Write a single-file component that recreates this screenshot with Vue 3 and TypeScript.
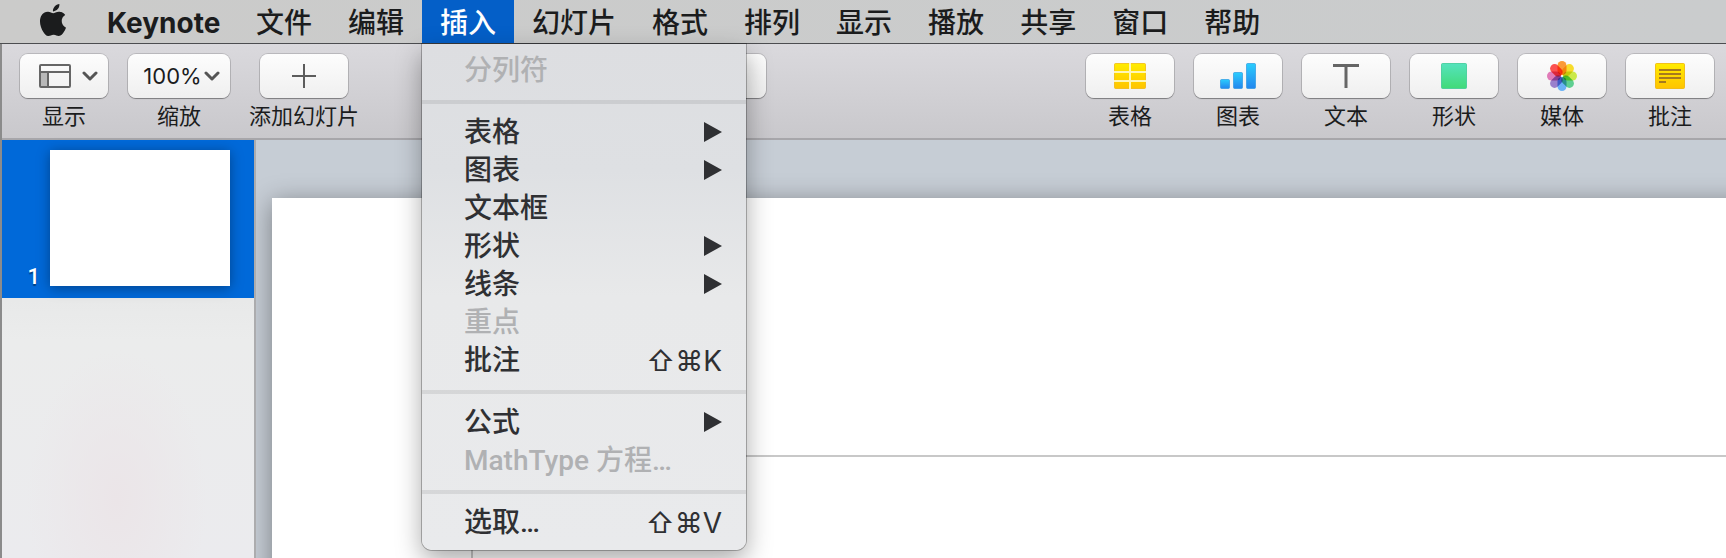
<script setup lang="ts">
import { ref } from 'vue'

interface MenuEntry {
  label: string
  disabled?: boolean
  submenu?: boolean
  keys?: string
}

interface Tool {
  icon: string
  label: string
}

const menus: string[] = ['文件', '编辑', '插入', '幻灯片', '格式', '排列', '显示', '播放', '共享', '窗口', '帮助']
const openMenu = ref<string>('插入')

const groups: MenuEntry[][] = [
  [{ label: '分列符', disabled: true }],
  [
    { label: '表格', submenu: true },
    { label: '图表', submenu: true },
    { label: '文本框' },
    { label: '形状', submenu: true },
    { label: '线条', submenu: true },
    { label: '重点', disabled: true },
    { label: '批注', keys: '⇧⌘K' },
  ],
  [
    { label: '公式', submenu: true },
    { label: 'MathType 方程…', disabled: true },
  ],
  [{ label: '选取…', keys: '⇧⌘V' }],
]

const tools: Tool[] = [
  { icon: 'table', label: '表格' },
  { icon: 'chart', label: '图表' },
  { icon: 'text', label: '文本' },
  { icon: 'shape', label: '形状' },
  { icon: 'media', label: '媒体' },
  { icon: 'note', label: '批注' },
]

const petals: string[] = ['#fb9a36', '#f7dc2c', '#cbe94a', '#5fcf91', '#6ab2f6', '#9a80cc', '#e07bb8', '#fb5150']
</script>

<template>
  <div class="screen">
    <nav class="menubar">
      <button class="apple" type="button" aria-label="Apple">
        <svg width="32" height="32" viewBox="0 0 24 24" fill="#1b1c1d">
          <path d="M12.152 6.896c-.948 0-2.415-1.078-3.96-1.04-2.04.027-3.91 1.183-4.961 3.014-2.117 3.675-.546 9.103 1.519 12.09 1.013 1.454 2.208 3.09 3.792 3.039 1.52-.065 2.09-.987 3.935-.987 1.831 0 2.35.987 3.96.948 1.637-.026 2.676-1.48 3.676-2.948 1.156-1.688 1.636-3.325 1.662-3.415-.039-.013-3.182-1.221-3.22-4.857-.026-3.04 2.48-4.494 2.597-4.559-1.429-2.09-3.623-2.324-4.39-2.376-2-.156-3.675 1.09-4.61 1.09zM15.53 3.83c.843-1.012 1.4-2.427 1.245-3.83-1.207.052-2.662.805-3.532 1.818-.78.896-1.454 2.338-1.273 3.714 1.338.104 2.715-.688 3.559-1.701" />
        </svg>
      </button>
      <button class="title app" type="button">Keynote</button>
      <div v-for="m in menus" :key="m" class="slot">
        <button class="title" :class="{ open: openMenu === m }" type="button" @click="openMenu = m">{{ m }}</button>
        <div v-if="m === '插入' && openMenu === m" class="menu">
          <div v-for="(g, i) in groups" :key="i" class="group">
            <button v-for="e in g" :key="e.label" class="entry" type="button" :disabled="e.disabled">
              <span>{{ e.label }}</span>
              <svg v-if="e.submenu" width="18" height="20" viewBox="0 0 18 20" fill="currentColor"><path d="M0 0 18 10 0 20z" /></svg>
              <span v-if="e.keys" class="keys">{{ e.keys }}</span>
            </button>
          </div>
        </div>
      </div>
    </nav>

    <div class="window">
      <header class="toolbar">
        <div class="tool">
          <button id="view" class="key pull" type="button">
            <svg width="32" height="24" viewBox="0 0 32 24" fill="none" stroke="#666" stroke-width="2">
              <path d="M2 8h8v14H2z" fill="#b9b9b9" stroke="none" />
              <rect x="1" y="1" width="30" height="22" rx="1" />
              <path d="M1 8h30M9 8v15" />
            </svg>
            <svg class="chevron" width="16" height="10" viewBox="0 0 16 10"><path d="m2 2 6 6 6-6" /></svg>
          </button>
          <label for="view">显示</label>
        </div>
        <div class="tool wide">
          <button id="zoom" class="key zoom" type="button">
            100%
            <svg class="chevron" width="16" height="10" viewBox="0 0 16 10"><path d="m2 2 6 6 6-6" /></svg>
          </button>
          <label for="zoom">缩放</label>
        </div>
        <div class="tool add">
          <button id="add" class="key" type="button">
            <svg width="24" height="24" viewBox="0 0 24 24" stroke="#5c5c5c" stroke-width="2"><path d="M12 0v24M0 12h24" /></svg>
          </button>
          <label for="add">添加幻灯片</label>
        </div>
        <div class="tool play">
          <button class="key" type="button"></button>
        </div>
        <div class="tools">
          <div v-for="t in tools" :key="t.icon" class="tool">
            <button :id="t.icon" class="key" type="button">
              <svg v-if="t.icon === 'table'" width="32" height="26" viewBox="0 0 32 26">
                <defs><linearGradient id="gold" x2="0" y2="1"><stop stop-color="#ffec00" /><stop offset="1" stop-color="#ffc400" /></linearGradient></defs>
                <rect x=".5" y=".5" width="31" height="25" rx="1" fill="url(#gold)" stroke="#f0b400" stroke-opacity=".7" />
                <path d="M16 0v26M0 9h32M0 18h32" stroke="#fff6b8" stroke-width="2" />
              </svg>
              <svg v-else-if="t.icon === 'chart'" width="36" height="26" viewBox="0 0 36 26">
                <defs><linearGradient id="blue" x2="0" y2="1"><stop stop-color="#2acdfd" /><stop offset="1" stop-color="#2286ee" /></linearGradient></defs>
                <g fill="url(#blue)" stroke="#1a8fe0" stroke-opacity=".6">
                  <rect x=".5" y="16.500" width="9" height="9" rx="1" />
                  <rect x="13.500" y="9.500" width="9" height="16" rx="1" />
                  <rect x="26.500" y=".5" width="9" height="25" rx="1" />
                </g>
              </svg>
              <svg v-else-if="t.icon === 'text'" width="26" height="26" viewBox="0 0 26 26" stroke="#666" stroke-width="3"><path d="M0 2.500h26M13 2v23" /></svg>
              <svg v-else-if="t.icon === 'shape'" width="26" height="26" viewBox="0 0 26 26">
                <defs><linearGradient id="green" x2="0" y2="1"><stop stop-color="#55e3bd" /><stop offset="1" stop-color="#41da78" /></linearGradient></defs>
                <rect x=".5" y=".5" width="25" height="25" rx="1" fill="url(#green)" stroke="#3ccb96" stroke-opacity=".8" />
              </svg>
              <svg v-else-if="t.icon === 'media'" class="flower" width="30" height="30" viewBox="-15 -15 30 30">
                <rect v-for="(c, i) in petals" :key="c" x="-4.500" y="-15" width="9" height="14" rx="4.500" :fill="c" :transform="`rotate(${i * 45})`" />
              </svg>
              <svg v-else width="30" height="26" viewBox="0 0 30 26">
                <rect x=".5" y=".5" width="29" height="25" rx="1" fill="url(#gold)" stroke="#f0b400" stroke-opacity=".8" />
                <path d="M4 7h22M4 11h22M4 15h22M4 19h7" stroke="#a67a1e" stroke-width="2" />
              </svg>
            </button>
            <label :for="t.icon">{{ t.label }}</label>
          </div>
        </div>
      </header>

      <div class="body">
        <aside class="sidebar">
          <button class="slide-row" type="button">
            <span class="num">1</span>
            <span class="thumb"></span>
          </button>
        </aside>
        <main class="canvas">
          <div class="slide">
            <div class="placeholder"></div>
          </div>
        </main>
      </div>
    </div>
  </div>
</template>

<style scoped>
.screen {
  display: flex;
  flex-direction: column;
  height: 100vh;
  overflow: hidden;
  font-family: Inter, "Noto Sans CJK SC", sans-serif;
  color: #1b1c1d;
}
button {
  margin: 0;
  padding: 0;
  border: 0;
  background: none;
  font: inherit;
  color: inherit;
}
svg {
  display: block;
  flex: none;
}
.menubar {
  position: relative;
  z-index: 2;
  display: flex;
  flex: none;
  height: 43px;
  border-bottom: 1px solid #4c4d50;
  background: linear-gradient(90deg, #cbcbca, #cacccd);
  font-size: 28px;
  line-height: 43px;
}
.apple {
  width: 89px;
  padding: 0 20px 4px 37px;
}
.title {
  display: block;
  height: 43px;
  padding: 3px 18px 0;
  line-height: 40px;
  white-space: nowrap;
  font-weight: 500;
}
.app {
  width: 149px;
  font-weight: 700;
}
.open {
  background: #045fc8;
  color: #fff;
}
.slot {
  position: relative;
}
.menu {
  position: absolute;
  top: 44px;
  left: 0;
  box-sizing: border-box;
  width: 324px;
  padding: 7px 0 9px;
  border-radius: 0 0 10px 10px;
  background: linear-gradient(#dddee1, #dee0e3 25%, #e8e9ea 50%, #e9eaec);
  box-shadow: 0 0 0 1px rgba(0, 0, 0, .26), 0 10px 26px rgba(0, 0, 0, .34);
  color: #2f3033;
  font-family: Roboto, Inter, "Noto Sans CJK SC", sans-serif;
  font-weight: 500;
}
.group + .group {
  margin-top: 11px;
  padding-top: 9px;
  border-top: 4px solid rgba(0, 0, 0, .08);
}
.entry {
  display: flex;
  align-items: center;
  justify-content: space-between;
  width: 100%;
  height: 38px;
  padding: 0 24px 0 42px;
  line-height: 38px;
  text-align: left;
}
.entry span {
  padding-top: 2px;
}
.entry .keys {
  font-family: Inter, sans-serif;
  font-weight: 400;
}
.entry:disabled {
  color: #b0b1b3;
}
.window {
  display: flex;
  flex: 1;
  flex-direction: column;
  min-height: 0;
  border-left: 2px solid #8b8b8b;
}
.toolbar {
  display: flex;
  flex: none;
  height: 94px;
  border-bottom: 2px solid #a7a6aa;
  padding: 0 12px 0 18px;
  background: linear-gradient(#dad9dd, #c9c8cc);
}
.tool {
  display: flex;
  flex-direction: column;
  align-items: center;
  width: 88px;
  margin-right: 20px;
  padding-top: 10px;
}
.tool label {
  margin-top: 2px;
  font-size: 22px;
  line-height: 32px;
  white-space: nowrap;
}
.key {
  display: flex;
  align-items: center;
  justify-content: center;
  width: 100%;
  height: 44px;
  gap: 11px;
  flex: none;
  border-radius: 8px;
  background: linear-gradient(#fdfdfd, #efefef);
  box-shadow: 0 0 0 1px rgba(0, 0, 0, .14), 0 1px 1px rgba(0, 0, 0, .3);
}
.pull {
  padding-left: 9px;
}
.wide {
  width: 102px;
}
.zoom {
  gap: 2px;
  padding-left: 5px;
  font-size: 22px;
}
.chevron {
  fill: none;
  stroke: #555;
  stroke-width: 3;
  stroke-linecap: round;
  stroke-linejoin: round;
}
.add {
  margin-left: 10px;
}
.play {
  margin-left: 310px;
}
.tools {
  display: flex;
  margin-left: auto;
}
.tools .tool:last-child {
  margin-right: 0;
}
.flower {
  isolation: isolate;
}
.flower rect {
  mix-blend-mode: multiply;
}
.body {
  display: flex;
  flex: 1;
  min-height: 0;
}
.sidebar {
  flex: none;
  width: 252px;
  border-right: 2px solid #acacae;
  background:
    radial-gradient(ellipse 90px 150px at 115px 360px, #ebe5e8, rgba(235, 229, 232, 0)),
    linear-gradient(#e8e9e9 160px, #ebecec 200px, #ebebee);
}
.slide-row {
  display: flex;
  align-items: flex-end;
  width: 100%;
  height: 158px;
  padding: 10px 24px 12px 0;
  background: #0069d9;
}
.num {
  flex: 1;
  padding-right: 10px;
  color: #fff;
  font-family: Roboto, sans-serif;
  font-size: 22px;
  font-weight: 500;
  line-height: 18px;
  text-align: right;
  text-shadow: 0 2px 1px rgba(0, 0, 0, .4);
}
.thumb {
  width: 180px;
  height: 136px;
  background: #fff;
  box-shadow: 0 2px 12px rgba(0, 0, 0, .36);
}
.canvas {
  display: flex;
  flex: 1;
  min-width: 0;
  overflow: hidden;
  padding: 58px 0 0 16px;
  background: #c6cdd5;
}
.slide {
  flex: 1;
  margin: 0 -40px -40px 0;
  padding: 257px 0 0 199px;
  background: #fff;
  box-shadow: 0 4px 24px rgba(0, 0, 0, .38);
}
.placeholder {
  height: 100%;
  border-top: 2px solid #c8c8c8;
  border-left: 2px solid #c8c8c8;
}
</style>

<style>
body {
  margin: 0;
}
</style>
